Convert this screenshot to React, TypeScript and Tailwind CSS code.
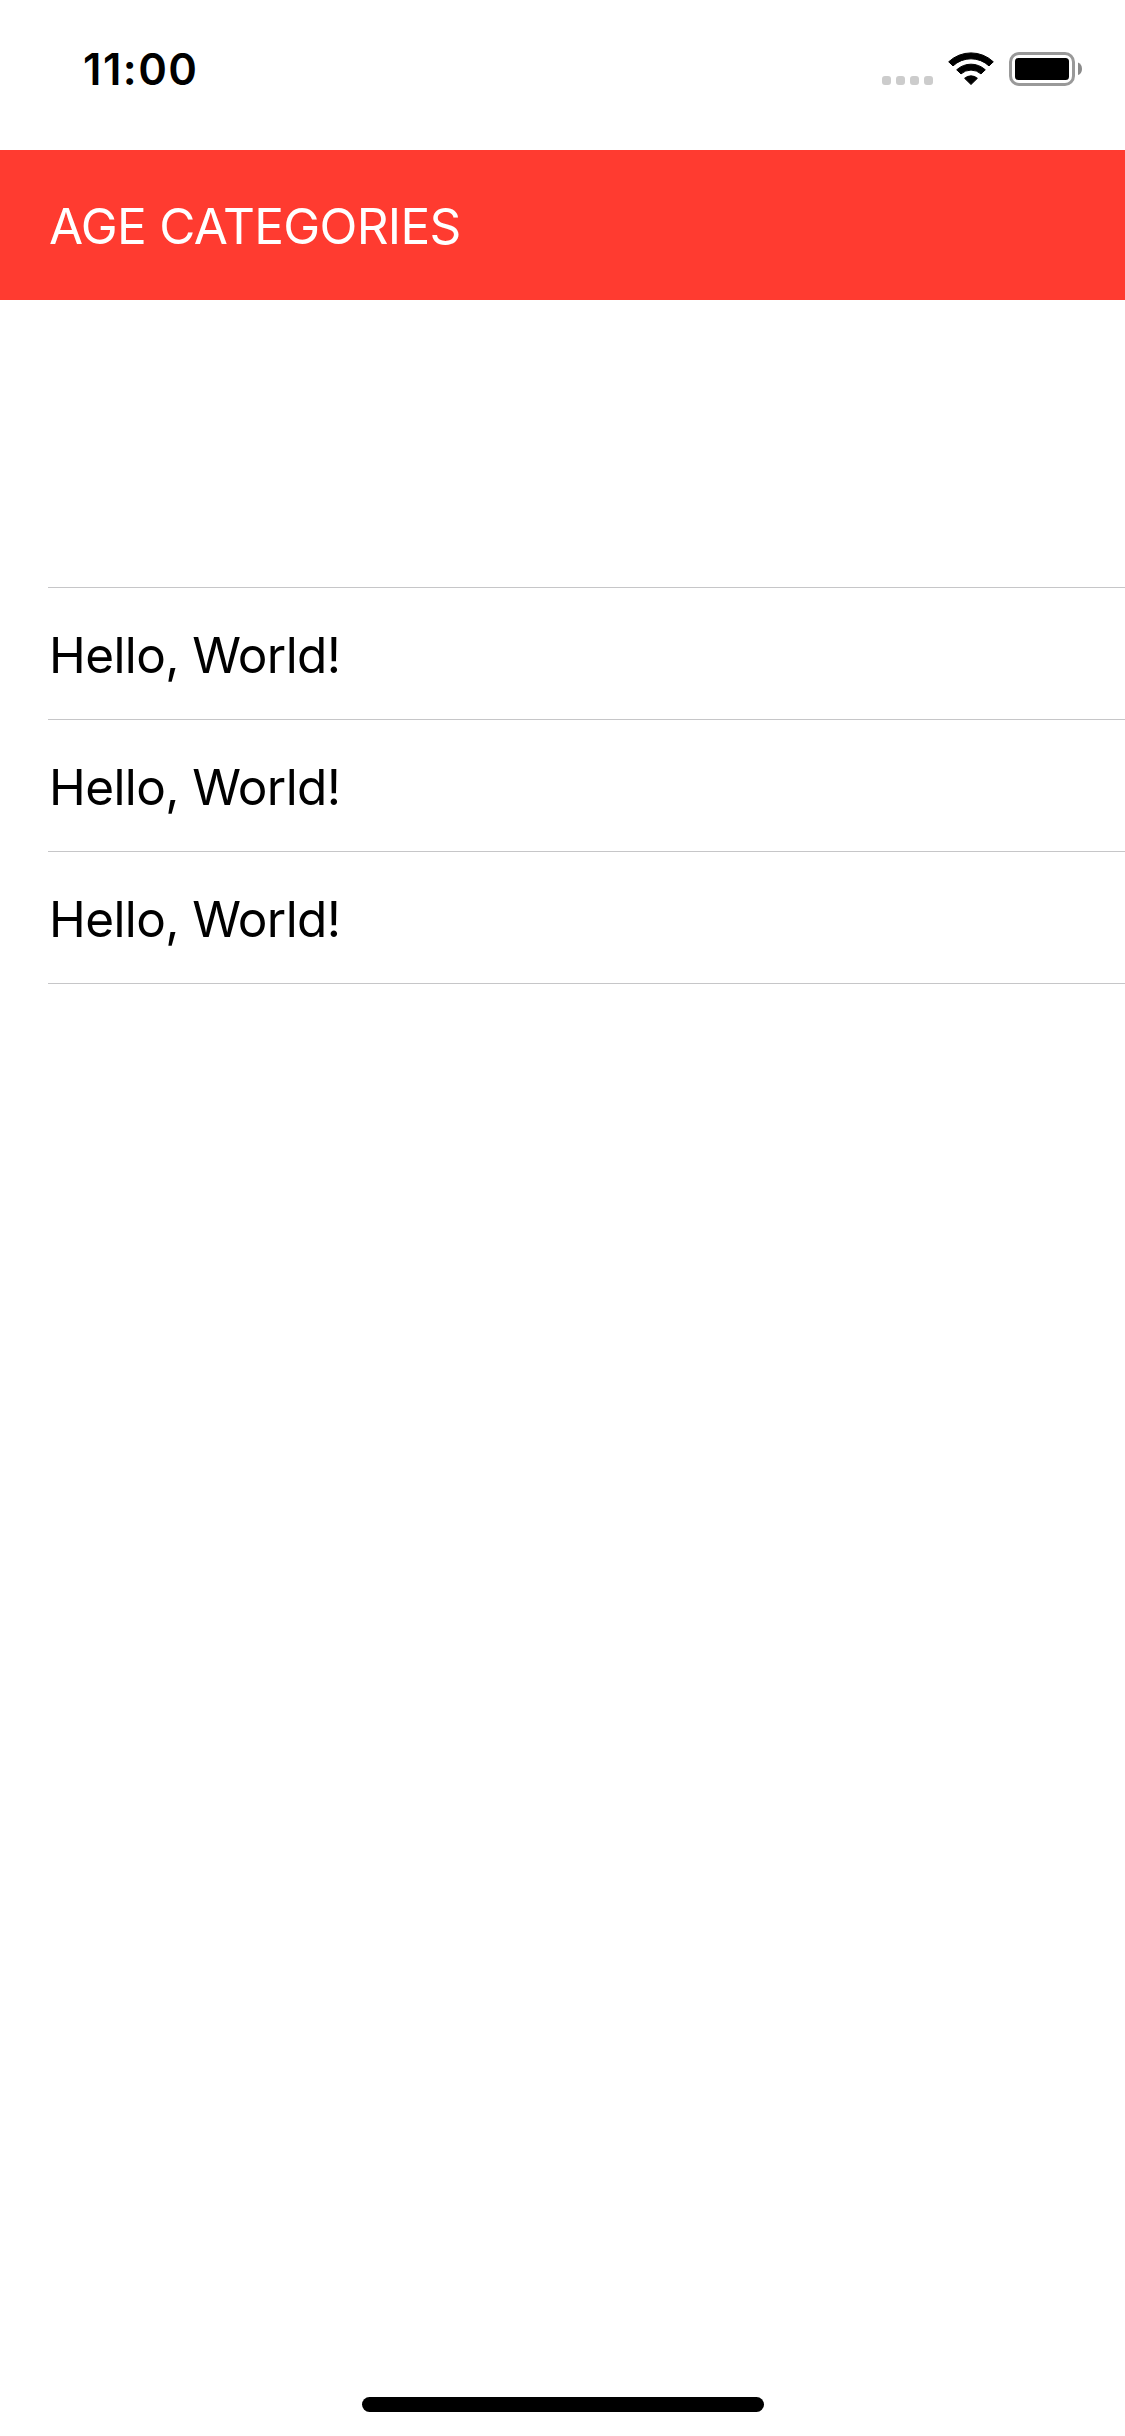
const rows = ["Hello, World!", "Hello, World!", "Hello, World!"];

function StatusIcons() {
  return (
    <svg className="mt-[48px] h-[42px] w-[204px]" viewBox="882 48 204 42">
      <g fill="#cccccc">
        <rect x="882" y="76" width="9" height="9" rx="3" />
        <rect x="896" y="76" width="9" height="9" rx="3" />
        <rect x="910" y="76" width="9" height="9" rx="3" />
        <rect x="924" y="76" width="9" height="9" rx="3" />
      </g>
      <g fill="#000" stroke="#000" strokeWidth="1" strokeLinejoin="round">
        <path d="M948.7 61.8A32.4 32.4 0 0 1 993.3 61.8L989 65.9A26.4 26.4 0 0 0 953 65.9Z" />
        <path d="M956.7 69.8A21 21 0 0 1 985.3 69.8L981 73.9A15 15 0 0 0 961 73.9Z" />
        <path d="M964.6 78.3A9.6 9.6 0 0 1 977.4 78.3L971 84.5Z" />
      </g>
      <rect x="1010.5" y="53.5" width="63" height="31" rx="8.5" fill="none" stroke="#999" strokeWidth="3" />
      <rect x="1015" y="58" width="54" height="22" rx="3.5" />
      <path d="M1078 62.5Q1082 64.3 1082 69T1078 75Z" fill="#8a8a8a" />
    </svg>
  );
}

export default function App() {
  return (
    <div className="flex h-[2436px] w-[1125px] flex-col bg-white font-['Inter',sans-serif] text-black">
      <header className="flex h-[150px] items-start justify-between pr-[39px] pl-[83px]">
        <time className="mt-[45px] text-[43.5px] leading-[48px] font-semibold tracking-[1.5px]">11:00</time>
        <StatusIcons />
      </header>
      <h1 className="flex h-[150px] items-center bg-[#ff3b30] pt-[3px] pl-[49px] text-[49.5px] tracking-[-0.7px] text-white">AGE CATEGORIES</h1>
      <ul className="mt-[287px] ml-[48px] border-t border-[#c6c6c8]">
        {rows.map((row, i) => (
          <li key={i} className="flex h-[132px] items-center border-b border-[#c6c6c8] pt-[3px] pl-px text-[49.5px] tracking-[-0.62px]">{row}</li>
        ))}
      </ul>
      <div className="mt-auto mb-[24px] h-[15px] w-[402px] self-center rounded-full bg-black" />
    </div>
  );
}
